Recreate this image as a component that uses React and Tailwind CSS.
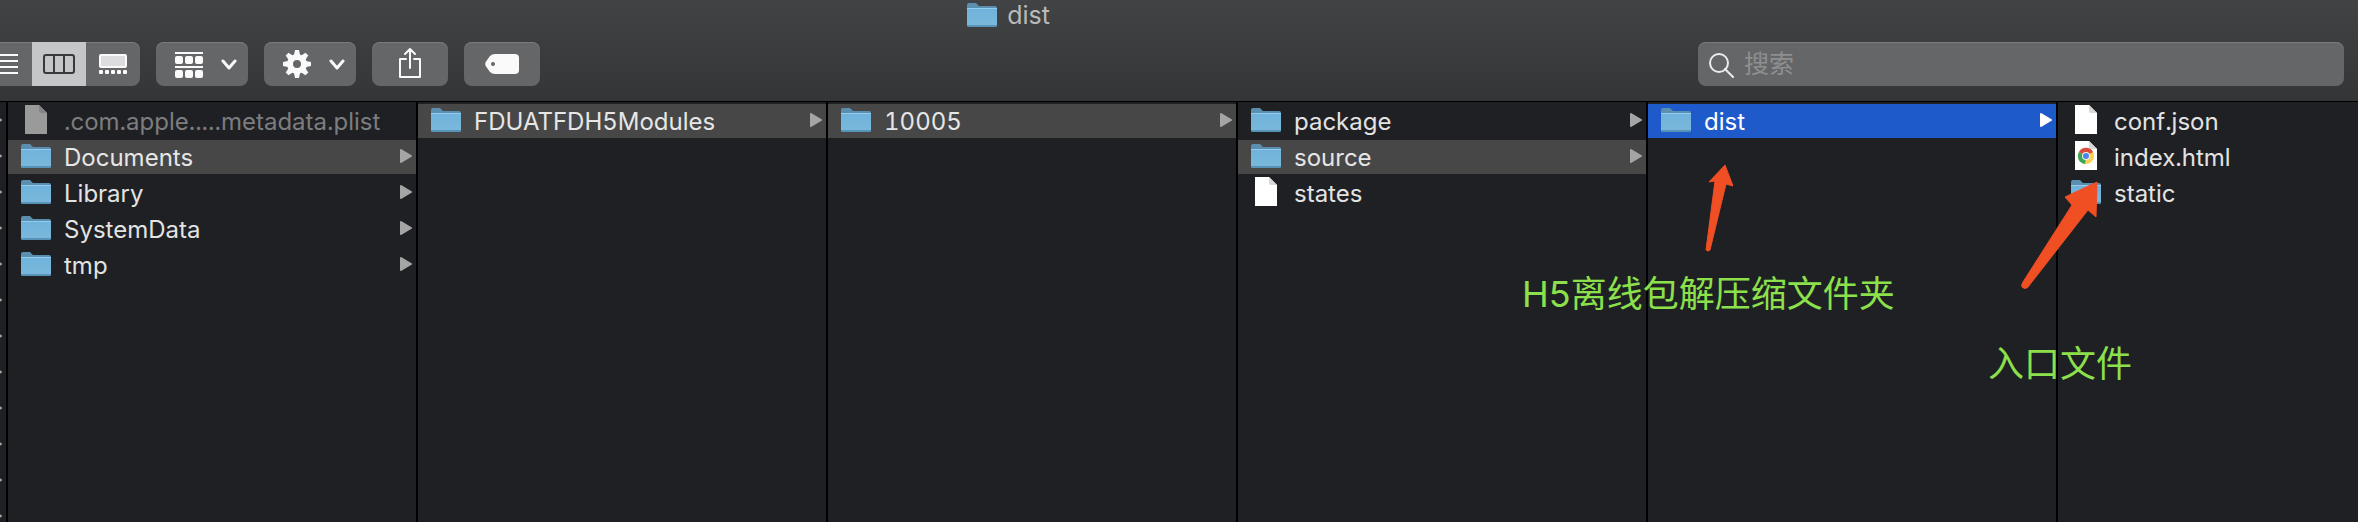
import { useState } from "react";

const columns = [
  {
    label: "Container",
    items: [
      { name: ".com.apple.....metadata.plist", icon: "file", dim: true },
      { name: "Documents", icon: "folder", selected: true },
      { name: "Library", icon: "folder" },
      { name: "SystemData", icon: "folder" },
      { name: "tmp", icon: "folder" },
    ],
  },
  { label: "Documents", items: [{ name: "FDUATFDH5Modules", icon: "folder", selected: true }] },
  { label: "FDUATFDH5Modules", items: [{ name: "10005", icon: "folder", selected: true }] },
  {
    label: "10005",
    items: [
      { name: "package", icon: "folder" },
      { name: "source", icon: "folder", selected: true },
      { name: "states", icon: "file" },
    ],
  },
  { label: "source", items: [{ name: "dist", icon: "folder", active: true }] },
  {
    label: "dist",
    items: [
      { name: "conf.json", icon: "file" },
      { name: "index.html", icon: "chrome" },
      { name: "static", icon: "folder", leaf: true },
    ],
  },
];

const buttonClass =
  "flex h-11 items-center justify-center rounded-lg bg-[#656668] text-[#fafafa] inset-shadow-[0_1px_0_#7b7c7e]";

// ----------------------------------------------------------------------

const FolderIcon = () => (
  <svg className="h-8 w-[30px] shrink-0" viewBox="0 0 30 32" aria-hidden="true">
    <defs>
      <linearGradient id="folder" x1="0" y1="0" x2="0" y2="1">
        <stop offset="0" stopColor="#6fb2dc" />
        <stop offset="1" stopColor="#7bb9db" />
      </linearGradient>
    </defs>
    <path d="M0 9V5q0-2 2-2h7l3 3h16q2 0 2 2v4H0z" fill="#5b8fb0" />
    <path d="M0 8h30v17q0 2-2 2H2q-2 0-2-2z" fill="url(#folder)" />
    <path d="M0 8h30v1H0z" fill="#93cdee" />
    <path d="M0 25h30q0 2-2 2H2q-2 0-2-2z" fill="#5793b6" />
  </svg>
);

const FileIcon = ({ dim, chrome }) => (
  <svg className="h-8 w-[30px] shrink-0" viewBox="0 0 30 32" aria-hidden="true">
    <path d="M4 0h14l8 8v21H4z" fill={dim ? "#9a9a9b" : "#fff"} />
    <path d="M18 0l8 8h-6q-2 0-2-2z" fill={dim ? "#858586" : "#d8d8d8"} />
    {chrome && (
      <>
        <circle cx="15" cy="15" r="8" fill="#f9cf55" />
        <path d="M15 15L8 11A8 8 0 0 1 22 11z" fill="#dd4b3e" />
        <path d="M15 15L8 11A8 8 0 0 0 14 23z" fill="#3aa757" />
        <circle cx="15" cy="15" r="4" fill="#f1f1f1" />
        <circle cx="15" cy="15" r="3" fill="#4a86e8" />
      </>
    )}
  </svg>
);

const Triangle = ({ className }) => (
  <svg className={className} viewBox="0 0 12 18" aria-hidden="true">
    <path d="M1 2l10 6-10 6z" fill="currentColor" stroke="currentColor" strokeWidth="2" strokeLinejoin="round" />
  </svg>
);

const Chevron = () => (
  <svg className="h-4 w-4 shrink-0" viewBox="0 0 16 16" aria-hidden="true">
    <path d="M2 5l6 7 6-7" fill="none" stroke="currentColor" strokeWidth="3" strokeLinecap="round" strokeLinejoin="round" />
  </svg>
);

const ListIcon = () => (
  <svg className="h-5 w-7 shrink-0" viewBox="0 0 28 20" aria-hidden="true">
    <path d="M0 1h28M0 7h28M0 13h28M0 19h28" stroke="currentColor" strokeWidth="2" />
  </svg>
);

const ColumnsIcon = () => (
  <svg className="h-5 w-8 shrink-0" viewBox="0 0 32 20" aria-hidden="true">
    <rect x="1" y="1" width="30" height="18" rx="2" fill="none" stroke="currentColor" strokeWidth="2" />
    <path d="M11 1v18M21 1v18" stroke="currentColor" strokeWidth="2" />
  </svg>
);

const GalleryIcon = () => (
  <svg className="h-5 w-7 shrink-0" viewBox="0 0 28 20" aria-hidden="true">
    <rect x="1" y="1" width="26" height="12" rx="1" fill="#dddde0" stroke="currentColor" strokeWidth="2" />
    {[0, 6, 12, 18, 24].map((x) => (
      <rect key={x} x={x} y="16" width="4" height="4" rx="1" fill="currentColor" />
    ))}
  </svg>
);

const GroupIcon = () => (
  <svg className="h-7 w-7 shrink-0" viewBox="0 0 28 28" aria-hidden="true">
    <path d="M0 3h28M0 17h28" stroke="currentColor" strokeWidth="2" />
    {[0, 10, 20].map((x) => (
      <g key={x} fill="currentColor">
        <rect x={x} y="6" width="8" height="8" rx="2" />
        <rect x={x} y="20" width="8" height="8" rx="2" />
      </g>
    ))}
  </svg>
);

const GearIcon = () => (
  <svg className="h-7 w-7 shrink-0" viewBox="-14 -14 28 28" aria-hidden="true">
    <circle r="7" fill="none" stroke="currentColor" strokeWidth="6" />
    {[0, 45, 90, 135, 180, 225, 270, 315].map((deg) => (
      <path key={deg} d="M-3 -9L-2 -14H2L3 -9z" fill="currentColor" transform={`rotate(${deg})`} />
    ))}
  </svg>
);

const ShareIcon = () => (
  <svg className="h-8 w-6 shrink-0" viewBox="0 0 24 32" aria-hidden="true">
    <path d="M8 11H2v18h20V11h-6M12 20V1M7 6l5-5 5 5" fill="none" stroke="currentColor" strokeWidth="2" strokeLinejoin="round" strokeLinecap="round" />
  </svg>
);

const TagIcon = () => (
  <svg className="h-5 w-[34px] shrink-0" viewBox="0 0 34 20" aria-hidden="true">
    <path d="M10 0h20q4 0 4 4v12q0 4-4 4H10Q7 20 5 18L1 12.500Q-.5 10 1 7.500L5 2Q7 0 10 0z" fill="currentColor" />
    <circle cx="8" cy="10" r="2" fill="#656668" />
  </svg>
);

// ----------------------------------------------------------------------

const Toolbar = () => {
  const [query, setQuery] = useState("");

  return (
    <header className="border-b border-black bg-linear-to-b from-[#424345] to-[#343537]">
      <h1 className="flex h-[42px] items-start justify-center gap-2.5 pr-[341px] text-[25px] leading-[30px] text-[#b9babb]">
        <FolderIcon />
        dist
      </h1>
      <div className="flex items-center gap-4 pr-3.5 pb-[15px]">
        <div className="flex h-11 overflow-hidden rounded-r-lg bg-[#656668] text-[#fafafa] inset-shadow-[0_1px_0_#7b7c7e]" role="group" aria-label="View">
          <button type="button" aria-label="List" className="flex w-8 items-center justify-end overflow-hidden pr-3.5">
            <ListIcon />
          </button>
          <button type="button" aria-label="Columns" aria-pressed="true" className="flex w-[54px] items-center justify-center bg-[#c5c6c8] text-[#38393b]">
            <ColumnsIcon />
          </button>
          <button type="button" aria-label="Gallery" className="flex w-[54px] items-center justify-center">
            <GalleryIcon />
          </button>
        </div>
        <button type="button" aria-label="Group" className={`${buttonClass} w-[92px] gap-[18px] pl-2`}>
          <GroupIcon />
          <Chevron />
        </button>
        <button type="button" aria-label="Actions" className={`${buttonClass} w-[92px] gap-[18px] pl-2`}>
          <GearIcon />
          <Chevron />
        </button>
        <button type="button" aria-label="Share" className={`${buttonClass} w-[76px]`}>
          <ShareIcon />
        </button>
        <button type="button" aria-label="Tags" className={`${buttonClass} w-[76px]`}>
          <TagIcon />
        </button>
        <label className="ml-auto flex h-11 w-[646px] items-center gap-2 rounded-lg bg-[#656668] pl-2.5 text-[#ececec] inset-shadow-[0_1px_0_#7b7c7e]">
          <svg className="h-7 w-7 shrink-0" viewBox="0 0 28 28" aria-hidden="true">
            <circle cx="11" cy="13" r="9" fill="none" stroke="currentColor" strokeWidth="2" />
            <path d="M17 19l8 8" stroke="currentColor" strokeWidth="2" strokeLinecap="round" />
          </svg>
          <input
            type="search"
            aria-label="搜索"
            placeholder="搜索"
            value={query}
            onChange={(e) => setQuery(e.target.value)}
            className="min-w-0 flex-1 bg-transparent text-[25px] leading-8 outline-none placeholder:text-[#8e8f91]"
          />
        </label>
      </div>
    </header>
  );
};

const Row = ({ item }) => {
  let tone = "text-[#e3e3e4]";
  if (item.dim) tone = "text-[#7c7d7f]";
  if (item.selected) tone = "bg-[#474747] text-[#e6e6e6]";
  if (item.active) tone = "bg-[#1e5aca] text-white";

  return (
    <li>
      <button type="button" className={`flex h-[34px] w-full items-center gap-[13px] pr-1 pl-[13px] text-left ${tone}`}>
        {item.icon === "folder" ? <FolderIcon /> : <FileIcon dim={item.dim} chrome={item.icon === "chrome"} />}
        <span className="min-w-0 flex-1 pt-0.5 whitespace-nowrap tabular-nums">{item.name}</span>
        {item.icon === "folder" && !item.leaf && (
          <Triangle className={`h-[18px] w-3 shrink-0 ${item.active ? "text-white" : "text-[#a5a5a6]"}`} />
        )}
      </button>
    </li>
  );
};

const Arrow = ({ className, viewBox, d }) => (
  <svg className={className} viewBox={viewBox} aria-hidden="true">
    <path d={d} fill="#f04e23" stroke="#f04e23" strokeLinejoin="round" />
  </svg>
);

export default function App() {
  return (
    <div className="relative flex min-h-screen flex-col overflow-hidden bg-[#1f2023] font-['Inter','Noto_Sans_CJK_SC',sans-serif]">
      <Toolbar />

      <main className="flex flex-1 text-[24px] leading-8">
        {/* edge of the column scrolled out to the left */}
        <div className="flex w-2 shrink-0 flex-col gap-[18px] overflow-hidden border-r-2 border-black pt-2.5 text-[#a5a5a6]">
          {Array.from({ length: 12 }, (_, i) => (
            <Triangle key={i} className="-ml-2.5 h-[18px] w-3 shrink-0" />
          ))}
        </div>
        {columns.map((column) => (
          <ul
            key={column.label}
            aria-label={column.label}
            className="flex w-[410px] shrink-0 flex-col gap-0.5 border-r-2 border-black pt-0.5 last:w-auto last:min-w-0 last:flex-1 last:border-r-0"
          >
            {column.items.map((item) => (
              <Row key={item.name} item={item} />
            ))}
          </ul>
        ))}
      </main>

      {/* notes drawn over the columns */}
      <Arrow
        className="absolute top-[164px] left-[1705px] h-[88px] w-7"
        viewBox="0 0 28 88"
        d="M20 1L28 22L21 20L5 86Q3 88 1 86L10 17L4 18z"
      />
      <Arrow
        className="absolute top-[181px] left-[2021px] h-[109px] w-20"
        viewBox="0 0 80 109"
        d="M76 1L75 36L67 29L7 106Q4 109 1 106Q0 104 2 101L51 24L44 16z"
      />
      <p className="absolute top-[270px] left-[1522px] text-[36px] leading-[48px] whitespace-nowrap text-[#8ce04c]">
        H5离线包解压缩文件夹
      </p>
      <p className="absolute top-[340px] left-[1988px] text-[36px] leading-[48px] whitespace-nowrap text-[#8ce04c]">
        入口文件
      </p>
    </div>
  );
}
